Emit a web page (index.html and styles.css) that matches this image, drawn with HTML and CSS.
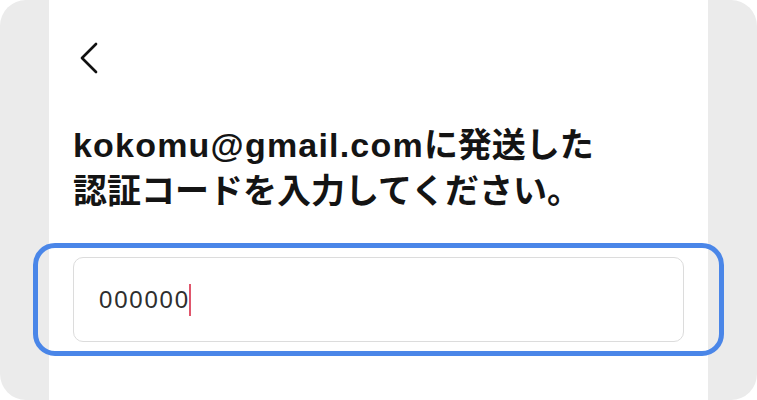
FILE: index.html
```html
<!DOCTYPE html>
<html lang="ja">
<head>
<meta charset="utf-8">
<link rel="stylesheet" href="styles.css">
</head>
<body>
<div class="frame">
  <div class="panel">
    <div class="back">
      <svg width="18" height="32" viewBox="0 0 18 32"><path d="M16 2 L2 16 L16 30" fill="none" stroke="#111" stroke-width="2.7" stroke-linecap="round" stroke-linejoin="round"/></svg>
    </div>
    <h1 class="title"><span class="email">kokomu@gmail.com</span>に発送した<br>認証コードを入力してください。</h1>
    <div class="focus">
      <div class="input"><span class="code">000000</span><span class="caret"></span></div>
    </div>
  </div>
</div>
</body>
</html>
```
FILE: styles.css
```css
html, body { margin: 0; padding: 0; background: #ffffff; }
body { font-family: "Liberation Sans", "Noto Sans CJK JP", sans-serif; }
.frame {
  width: 757px;
  height: 400px;
  background: #ebebeb;
  border-radius: 26px;
  display: flex;
}
.panel {
  margin-left: 49px;
  width: 659px;
  height: 400px;
  background: #ffffff;
  box-sizing: border-box;
  padding: 42px 24px 0 24px;
}
.back { margin-left: 7px; height: 32px; }
.back svg { display: block; }
.title {
  margin: 48px 0 0 0;
  font-size: 34px;
  line-height: 46px;
  font-weight: 700;
  color: #141414;
}
.email { letter-spacing: 1.2px; }
.focus {
  margin: 29px -40px 0 -40px;
  border: 5px solid #4a86e8;
  border-radius: 22px;
  padding: 9px 35px;
}
.input {
  height: 85px;
  box-sizing: border-box;
  border: 1px solid #dcdcdc;
  border-radius: 10px;
  display: flex;
  align-items: center;
  padding-left: 25px;
}
.code {
  font-size: 24px;
  letter-spacing: 1.8px;
  color: #2e2e2e;
}
.caret {
  display: inline-block;
  width: 2px;
  height: 32px;
  background: #e0566c;
  margin-left: -1px;
}
```
